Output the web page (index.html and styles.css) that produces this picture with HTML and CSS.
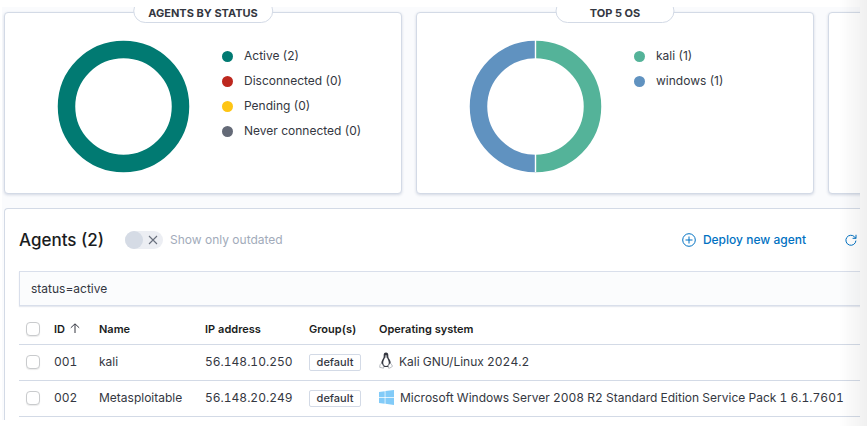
FILE: index.html
```html
<!DOCTYPE html>
<html lang="en">
<head>
<meta charset="utf-8">
<title>Agents</title>
<link rel="stylesheet" href="styles.css">
</head>
<body>
<main class="app">
  <section class="cards">
    <article class="card">
      <h2 class="card-title">AGENTS BY STATUS</h2>
      <svg class="donut" viewBox="0 0 132 132" aria-hidden="true">
        <circle cx="66.500" cy="66.500" r="57" fill="none" stroke="#017a72" stroke-width="17.5"/>
      </svg>
      <ul class="legend">
        <li><span class="dot active"></span>Active (2)</li>
        <li><span class="dot disconnected"></span>Disconnected (0)</li>
        <li><span class="dot pending"></span>Pending (0)</li>
        <li><span class="dot never"></span>Never connected (0)</li>
      </ul>
    </article>
    <article class="card">
      <h2 class="card-title">TOP 5 OS</h2>
      <svg class="donut" viewBox="0 0 132 132" aria-hidden="true">
        <path d="M66.500 9.500a57 57 0 0 1 0 114" fill="none" stroke="#54b399" stroke-width="17.5"/>
        <path d="M66.500 9.500a57 57 0 0 0 0 114" fill="none" stroke="#6092c0" stroke-width="17.5"/>
        <path d="M66.500 0v19M66.500 114v18" stroke="#fff" stroke-width="1.4"/>
      </svg>
      <ul class="legend">
        <li><span class="dot kali"></span>kali (1)</li>
        <li><span class="dot windows"></span>windows (1)</li>
      </ul>
    </article>
    <article class="card"></article>
  </section>

  <section class="panel">
    <header class="panel-head">
      <h1>Agents (2)</h1>
      <label class="switch">
        <input type="checkbox" role="switch" disabled>
        <span class="track">
          <span class="thumb"></span>
          <svg viewBox="0 0 10 10" aria-hidden="true"><path d="M1 1l8 8M9 1l-8 8" stroke="#69707d" stroke-width="1.1" fill="none"/></svg>
        </span>
        Show only outdated
      </label>
      <a class="deploy" href="#deploy">
        <svg viewBox="0 0 14 14" aria-hidden="true"><g fill="none" stroke="#0071c2"><circle cx="7" cy="7" r="6.3"/><path d="M7 3.5v7M3.5 7h7"/></g></svg>
        Deploy new agent
      </a>
      <button class="refresh" type="button" aria-label="Refresh">
        <svg viewBox="0 0 12 12" aria-hidden="true"><path d="M10.9 6.6A5 5 0 1 1 9.6 2.9L10.9 4.3M11 .8v3.5H7.6" fill="none" stroke="#0071c2"/></svg>
      </button>
    </header>
    <input class="search" type="text" value="status=active" aria-label="Search agents">
    <table class="agents">
      <thead>
        <tr>
          <th class="c-check"><input type="checkbox" aria-label="Select all"></th>
          <th class="c-id">ID <svg class="sort" viewBox="0 0 10 10" aria-hidden="true"><path d="M5 10V1M.8 4.8L5 .8l4.2 4" fill="none" stroke="#343741"/></svg></th>
          <th class="c-name">Name</th>
          <th class="c-ip">IP address</th>
          <th class="c-group">Group(s)</th>
          <th>Operating system</th>
        </tr>
      </thead>
      <tbody>
        <tr>
          <td><input type="checkbox" aria-label="Select 001"></td>
          <td>001</td>
          <td>kali</td>
          <td>56.148.10.250</td>
          <td><span class="badge">default</span></td>
          <td><span class="os linux">
            <svg viewBox="0 0 14 17" aria-hidden="true">
              <path d="M7 .5C5.3.5 4.6 1.7 4.7 3.2c.1 2-.2 2.600-1.100 4C2.800 8.500 2.300 9.800 2.300 11.300l2 3.700h5.400l2-3.700c0-1.700-.5-2.900-1.400-4.200C9.300 5.700 9.300 5 9.300 3.200 9.300 1.500 8.600.5 7 .5z" fill="#343741"/>
              <path d="M7 5.200c-.8 0-1.200.5-1.400 1.300-.3 1.100-1.400 2.300-1.400 4.200 0 2 1.200 3.300 2.800 3.300s2.800-1.300 2.800-3.300c0-1.900-1-3.100-1.400-4.200C8.200 5.700 7.800 5.200 7 5.200z" fill="#fff"/>
              <path d="M5.700 3.900L7 3.300l1.300.6L7 4.900z" fill="#ddd"/>
              <path d="M2.500 11.200L4.900 14.700 4.500 16.200.7 15.300 1 12.800zM11.500 11.200L9.300 13.200 9.400 16.100 10.800 16.100 13.500 14.300 12.700 12.800z" fill="#fff" stroke="#8c9099" stroke-width=".6"/>
            </svg>Kali GNU/Linux 2024.2</span></td>
        </tr>
        <tr>
          <td><input type="checkbox" aria-label="Select 002"></td>
          <td>002</td>
          <td>Metasploitable</td>
          <td>56.148.20.249</td>
          <td><span class="badge">default</span></td>
          <td><span class="os win">
            <svg viewBox="0 0 15 15" aria-hidden="true"><path d="M0 2l5.700-.8v5.900H0zM6.400 1.100L15 0v7.100H6.400zM0 7.800h5.700v5.900L0 12.900zM6.400 7.800H15V15l-8.600-1.200z" fill="#82cbf8"/></svg>Microsoft Windows Server 2008 R2 Standard Edition Service Pack 1 6.1.7601</span></td>
        </tr>
      </tbody>
    </table>
  </section>
</main>
<div class="edge"></div>
</body>
</html>
```

FILE: styles.css
```css
* {
  box-sizing: border-box;
}

body {
  margin: 0;
  padding: 7px 7px 0 2px;
  background: #fff;
  color: #343741;
  font: 12px/20px Inter, "Liberation Sans", sans-serif;
  overflow: hidden;
}

.app {
  background: #fafbfd;
  padding: 5px 0 0 2px;
  overflow: hidden;
}

.cards {
  display: flex;
  gap: 14px;
}

.card {
  position: relative;
  flex: 0 0 46.5%;
  display: flex;
  align-items: flex-start;
  gap: 33px;
  min-height: 182px;
  padding: 27px 0 0 52px;
  background: #fff;
  border: 1px solid #d3dae6;
  border-radius: 4px;
  box-shadow: 0 1px 3px rgba(60, 80, 130, 0.2);
}

.card-title {
  position: absolute;
  top: -14px;
  left: 50%;
  transform: translateX(-50%);
  min-width: 119px;
  margin: 0;
  padding: 7px 14px 3px;
  background: #fff;
  border: 1px solid #d3dae6;
  border-radius: 12px;
  font-size: 11px;
  font-weight: 700;
  line-height: 12px;
  text-align: center;
  white-space: nowrap;
}

.donut {
  width: 132px;
  height: 132px;
  flex: none;
  overflow: visible;
}

.legend {
  list-style: none;
  margin: 0;
  padding: 6px 0 0;
  display: grid;
  gap: 5px;
}

.legend li {
  display: flex;
  align-items: center;
  gap: 11px;
  white-space: nowrap;
}

.dot {
  width: 11px;
  height: 11px;
  border-radius: 50%;
}

.active { background: #017a72; }
.disconnected { background: #bd271e; }
.pending { background: #fec514; }
.never { background: #646a77; }
.kali { background: #54b399; }
.windows { background: #6092c0; }

.panel {
  margin-top: 14px;
  padding: 14px 0 3px 14px;
  background: #fff;
  border: 1px solid #d3dae6;
  border-width: 1px 0 0 1px;
  border-radius: 4px 0 0 0;
}

.panel-head {
  display: flex;
  align-items: center;
  height: 34px;
  padding-right: 3px;
}

h1 {
  margin: 0 21px 0 0;
  color: #1a1c21;
  font-size: 17px;
  font-weight: 500;
  line-height: 24px;
}

.switch {
  position: relative;
  display: flex;
  align-items: center;
  gap: 7px;
  color: #a2abba;
}

.switch input {
  position: absolute;
  inset: 0;
  margin: 0;
  opacity: 0;
}

.track {
  display: flex;
  align-items: center;
  gap: 5px;
  width: 38px;
  height: 18px;
  border-radius: 9px;
  background: #eceef3;
}

.track svg {
  width: 10px;
  height: 10px;
}

.thumb {
  width: 18px;
  height: 18px;
  border-radius: 50%;
  background: #d5dbe5;
}

.deploy {
  display: flex;
  align-items: center;
  gap: 7px;
  margin-left: auto;
  color: #0071c2;
  font-weight: 500;
  text-decoration: none;
}

.deploy svg {
  width: 14px;
  height: 14px;
}

.refresh {
  display: flex;
  margin: 0 0 0 39px;
  padding: 0;
  border: 0;
  background: none;
}

.refresh svg {
  width: 12px;
  height: 12px;
}

.search {
  display: block;
  width: 100%;
  height: 35px;
  margin-top: 14px;
  padding: 0 11px;
  border: 1px solid #d9dfeb;
  border-right: 0;
  border-radius: 0;
  background: #fbfcfd;
  box-shadow: 0 1px 1px rgba(60, 80, 130, 0.12);
  color: #343741;
  font: inherit;
}

.agents {
  width: 100%;
  margin-top: 8px;
  border-collapse: collapse;
  table-layout: fixed;
  font-variant-numeric: tabular-nums;
}

.agents th,
.agents td {
  height: 36px;
  padding: 0;
  border-bottom: 1px solid #d3dae6;
  text-align: left;
  white-space: nowrap;
}

.agents th {
  height: 30px;
  color: #1a1c21;
  font-size: 11px;
  font-weight: 600;
}

.c-check { width: 35px; }
.c-id { width: 45px; }
.c-name { width: 106px; }
.c-ip { width: 104px; }
.c-group { width: 70px; }

.agents input {
  appearance: none;
  display: block;
  width: 14px;
  height: 14px;
  margin: 0 0 0 7px;
  border: 1px solid #c9cbcd;
  border-radius: 4px;
  background: #fff;
  box-shadow: 0 1px 1px rgba(0, 0, 0, 0.08);
}

.sort {
  width: 10px;
  height: 10px;
  margin-left: 2px;
}

.badge {
  display: block;
  width: 52px;
  border: 1px solid #d3dae6;
  border-radius: 2px;
  font-size: 11px;
  font-weight: 500;
  line-height: 15px;
  text-align: center;
}

.os {
  display: flex;
  align-items: center;
}

.os svg {
  flex: none;
}

.linux svg {
  width: 14px;
  height: 17px;
  margin: 0 6px 4px 0;
}

.win svg {
  width: 15px;
  height: 15px;
  margin: 0 6px 2px 0;
}

.edge {
  position: fixed;
  inset: 0 0 0 auto;
  width: 28px;
  background: linear-gradient(to right, rgba(0, 0, 0, 0), rgba(0, 0, 0, 0.06));
  pointer-events: none;
}
```
